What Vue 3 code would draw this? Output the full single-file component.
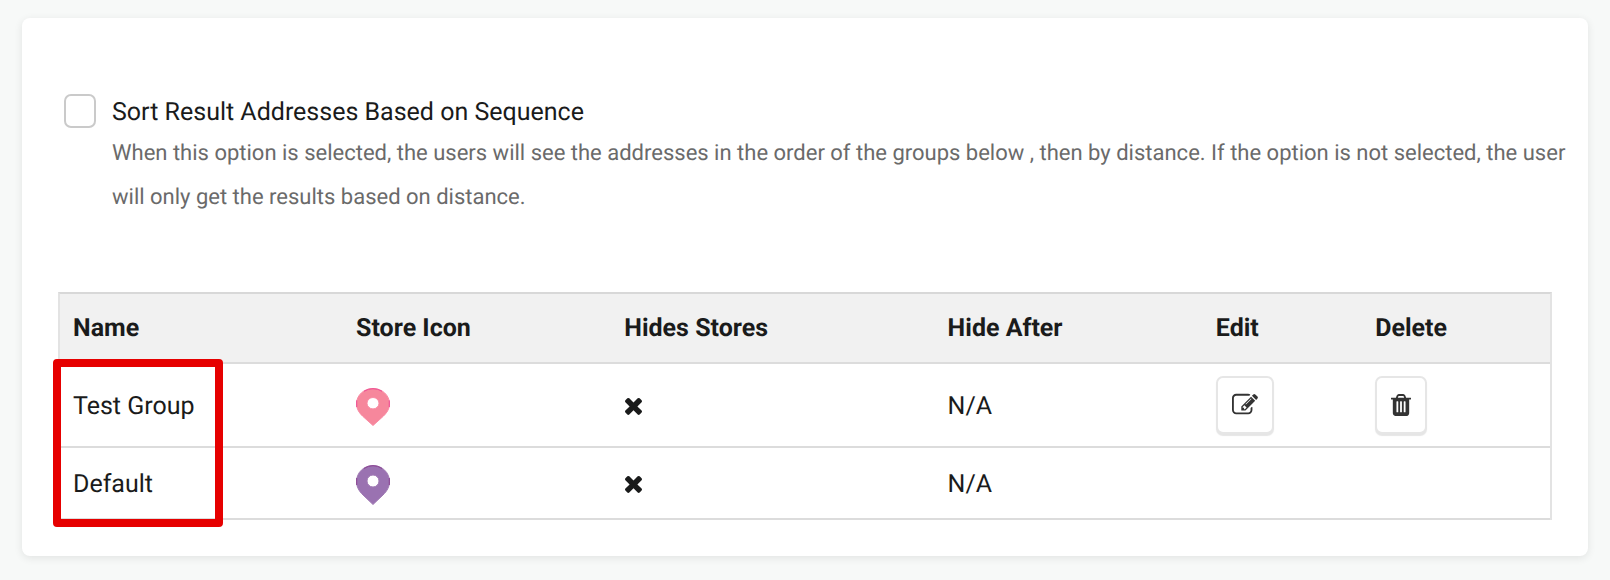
<script setup>
import { ref } from 'vue'

const sortBySequence = ref(false)

const groups = [
  { name: 'Test Group', pin: 'pink', hideAfter: 'N/A', editable: true },
  { name: 'Default', pin: 'purple', hideAfter: 'N/A', editable: false },
]
</script>

<template>
  <main class="page">
    <section class="card">
      <div class="option">
        <input
          id="sort-sequence"
          v-model="sortBySequence"
          class="option-check"
          type="checkbox"
          aria-describedby="sort-help"
        />
        <div class="option-text">
          <label class="option-label" for="sort-sequence">Sort Result Addresses Based on Sequence</label>
          <p id="sort-help" class="option-help">
            When this option is selected, the users will see the addresses in the order of the groups below , then by
            distance. If the option is not selected, the user will only get the results based on distance.
          </p>
        </div>
      </div>

      <div class="groups-wrap">
        <table class="groups">
          <colgroup>
            <col class="col-name" />
            <col class="col-icon" />
            <col class="col-hides" />
            <col class="col-after" />
            <col class="col-edit" />
            <col />
          </colgroup>
          <thead>
            <tr>
              <th scope="col">Name</th>
              <th scope="col">Store Icon</th>
              <th scope="col">Hides Stores</th>
              <th scope="col">Hide After</th>
              <th scope="col">Edit</th>
              <th scope="col">Delete</th>
            </tr>
          </thead>
          <tbody>
            <tr v-for="group in groups" :key="group.name">
              <td class="low">{{ group.name }}</td>
              <td class="low">
                <svg class="pin" :class="group.pin" viewBox="0 0 34 40" preserveAspectRatio="none" aria-hidden="true">
                  <path
                    class="pin-body"
                    fill-rule="evenodd"
                    d="M17 .5C8 .5.5 7.500.5 16.500C.5 22 3 26 7 30L17 39.500L27 30C31 26 33.500 22 33.500 16.500C33.500 7.500 26 .5 17 .5ZM17 10A6 6 0 1 1 17 22A6 6 0 1 1 17 10Z"
                  />
                  <path class="pin-edge" d="M8 3.500Q12 .7 17 .7T26 3.500M.7 13V20M33.300 13V20" />
                </svg>
              </td>
              <td>
                <svg class="cross" viewBox="302 238 1188 1316" role="img" aria-label="No">
                  <path
                    d="M1490 1322q0 40-28 68l-136 136q-28 28-68 28t-68-28l-294-294-294 294q-28 28-68 28t-68-28l-136-136q-28-28-28-68t28-68l294-294-294-294q-28-28-28-68t28-68l136-136q28-28 68-28t68 28l294 294 294-294q28-28 68-28t68 28l136 136q28 28 28 68t-28 68l-294 294 294 294q28 28 28 68z"
                  />
                </svg>
              </td>
              <td class="low">{{ group.hideAfter }}</td>
              <td>
                <button v-if="group.editable" class="action" type="button" aria-label="Edit">
                  <svg class="glyph-edit" viewBox="0 0 1792 1792" aria-hidden="true">
                    <path
                      d="M888 1184l116-116-152-152-116 116v56h96v96h56zm440-720q-16-16-33 1l-350 350q-17 17-1 33t33-1l350-350q17-17 1-33zm80 594v190q0 119-84.500 203.500t-203.500 84.500h-832q-119 0-203.500-84.500t-84.500-203.500v-832q0-119 84.500-203.500t203.500-84.500h832q63 0 117 25 15 7 18 23 3 17-9 29l-49 49q-14 14-32 8-23-6-45-6h-832q-66 0-113 47t-47 113v832q0 66 47 113t113 47h832q66 0 113-47t47-113v-126q0-13 9-22l64-64q15-15 35-7t20 29zm-96-738l288 288-672 672h-288v-288zm444 132l-92 92-288-288 92-92q28-28 68-28t68 28l152 152q28 28 28 68t-28 68z"
                    />
                  </svg>
                </button>
              </td>
              <td>
                <button v-if="group.editable" class="action" type="button" aria-label="Delete">
                  <svg class="glyph-trash" viewBox="192 0 1408 1792" aria-hidden="true">
                    <path
                      d="M704 1376v-704q0-14-9-23t-23-9h-64q-14 0-23 9t-9 23v704q0 14 9 23t23 9h64q14 0 23-9t9-23zm256 0v-704q0-14-9-23t-23-9h-64q-14 0-23 9t-9 23v704q0 14 9 23t23 9h64q14 0 23-9t9-23zm256 0v-704q0-14-9-23t-23-9h-64q-14 0-23 9t-9 23v704q0 14 9 23t23 9h64q14 0 23-9t9-23zm-544-992h448l-48-117q-7-9-17-11h-317q-10 2-17 11zm928 32v64q0 14-9 23t-23 9h-96v948q0 83-47 143.500t-113 60.500h-832q-66 0-113-58.500t-47-141.500v-952h-96q-14 0-23-9t-9-23v-64q0-14 9-23t23-9h309l70-167q15-37 54-63t79-26h320q40 0 79 26t54 63l70 167h309q14 0 23 9t9 23z"
                    />
                  </svg>
                </button>
              </td>
            </tr>
          </tbody>
        </table>
        <div class="highlight" aria-hidden="true"></div>
      </div>
    </section>
  </main>
</template>

<style>
body {
  margin: 0;
  background: #f7f9f8;
}
</style>

<style scoped>
.page {
  padding: 18px 22px 24px;
  font-family: Roboto, "Liberation Sans", sans-serif;
  font-size: 25px;
  line-height: 32px;
  color: #1a1b1b;
  text-rendering: geometricPrecision;
}

.card {
  padding: 76px 0 36px;
  background: #fff;
  border-radius: 8px;
  box-shadow: 0 2px 8px rgba(0, 0, 0, 0.09);
}

.option {
  display: flex;
  align-items: flex-start;
  gap: 16px;
  padding: 0 16px 0 42px;
}

.option-check {
  appearance: none;
  flex: none;
  box-sizing: border-box;
  width: 32px;
  height: 34px;
  margin: 0;
  border: 2px solid #cacaca;
  border-radius: 7px;
  background: #fff;
}

.option-check:checked {
  background: #1a73c8;
}

.option-label {
  display: block;
  line-height: 38px;
}

.option-help {
  margin: 0;
  font-size: 22px;
  line-height: 44px;
  color: #6a6a6a;
}

.groups-wrap {
  position: relative;
  margin: 72px 36px 0;
}

.groups {
  width: 100%;
  table-layout: fixed;
  border: 2px solid #e3e3e3;
  border-top-color: #d8d8d8;
  border-bottom: 0;
  border-spacing: 0;
}

.col-name {
  width: 19%;
}

.col-icon {
  width: 18%;
}

.col-hides {
  width: 21.7%;
}

.col-after {
  width: 18%;
}

.col-edit {
  width: 10.7%;
}

.groups th,
.groups td {
  box-sizing: border-box;
  height: 72px;
  padding: 0 13px;
  border-bottom: 2px solid #dcdcdc;
  text-align: left;
  vertical-align: middle;
}

.groups th {
  height: 70px;
  padding-top: 2px;
  background: #f1f1f1;
  font-weight: 700;
}

.groups td.low {
  padding-top: 4px;
}

.groups td:nth-child(5),
.groups td:nth-child(6) {
  padding-top: 12px;
  padding-bottom: 12px;
}

.pin,
.cross {
  display: block;
}

.pin {
  width: 34px;
  height: 40px;
}

.pin.pink {
  height: 38px;
}

.pin-edge {
  fill: none;
  stroke-width: 1;
}

.pink .pin-body {
  fill: #f6879c;
  stroke: #f98ba3;
}

.pink .pin-edge {
  stroke: #ed4b93;
}

.purple .pin-body {
  fill: #9a72b1;
  stroke: #a07ab4;
}

.purple .pin-edge {
  stroke: #8a4391;
}

.cross {
  width: 17px;
  height: 19px;
  margin-left: 1px;
  fill: #1a1b1b;
}

.action {
  display: flex;
  align-items: center;
  box-sizing: border-box;
  height: 58px;
  padding: 0 14px;
  border: 2px solid #e6e6e6;
  border-radius: 7px;
  background: #fff;
  box-shadow: 0 2px 1px rgba(0, 0, 0, 0.1);
  color: #333;
  cursor: pointer;
}

.action svg {
  display: block;
  height: 26px;
  fill: currentColor;
}

.glyph-edit {
  width: 26px;
}

.glyph-trash {
  width: 20px;
}

/* Frame drawn over the group names */
.highlight {
  position: absolute;
  top: 67px;
  bottom: -7px;
  left: -5px;
  box-sizing: border-box;
  width: 170px;
  border: 8px solid #e60000;
  border-radius: 4px;
  pointer-events: none;
}
</style>
